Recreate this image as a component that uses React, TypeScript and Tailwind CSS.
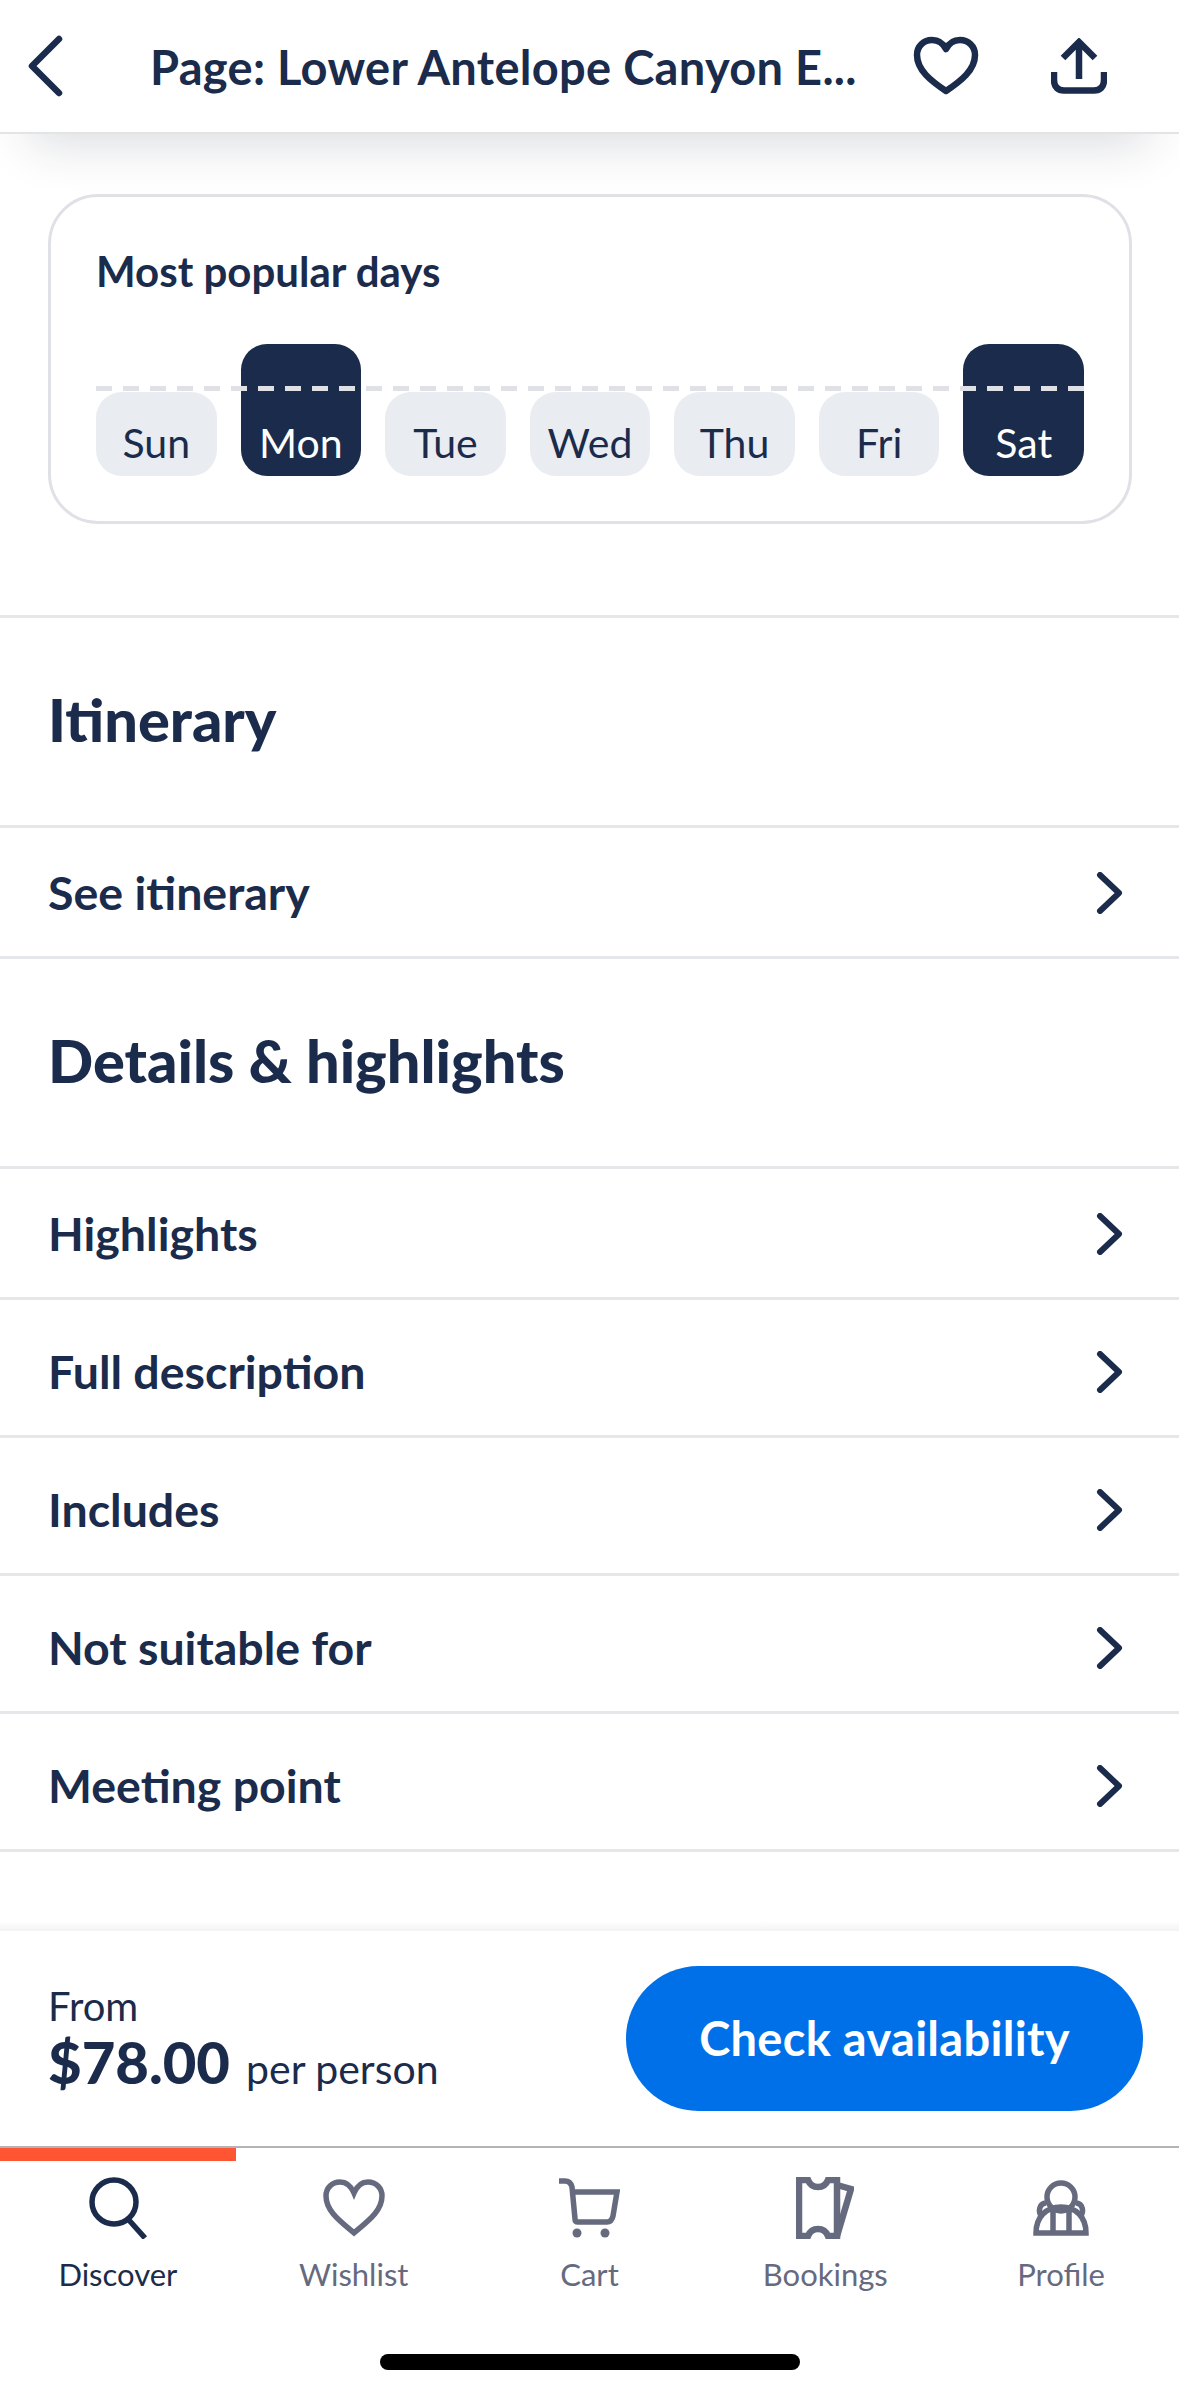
const days = [
  { label: "Sun", busy: false },
  { label: "Mon", busy: true },
  { label: "Tue", busy: false },
  { label: "Wed", busy: false },
  { label: "Thu", busy: false },
  { label: "Fri", busy: false },
  { label: "Sat", busy: true },
];

const details = ["Highlights", "Full description", "Includes", "Not suitable for", "Meeting point"];

function Chevron() {
  return (
    <svg className="mt-[2px]" width="30" height="42" viewBox="0 0 30 42" fill="none" stroke="#1b2b4b" strokeWidth="6" strokeLinecap="round" strokeLinejoin="round">
      <path d="M5 3l19 18L5 39" />
    </svg>
  );
}

function Row({ label, tall }: { label: string; tall?: boolean }) {
  return (
    <div className={`flex items-center justify-between border-b-[3px] border-[#e6e7ea] pl-[48px] pr-[54px] ${tall ? "h-[138px] pt-[7px]" : "h-[131px]"}`}>
      <span className="text-[46.500px] font-bold leading-none text-[#1b2b4b]">{label}</span>
      <Chevron />
    </div>
  );
}

function SectionTitle({ children }: { children: string }) {
  return (
    <div className="flex h-[210px] items-center border-b-[3px] border-[#e6e7ea] pb-[3px] pl-[48px]">
      <h2 className="text-[59.500px] font-black leading-none text-[#1b2b4b]">{children}</h2>
    </div>
  );
}

function NavItem({ label, active, children }: { label: string; active?: boolean; children: React.ReactNode }) {
  return (
    <div className={`flex flex-col items-center ${active ? "text-[#1b2b4b]" : "text-[#666a7e]"}`}>
      <div className="flex h-[62px] items-center justify-center">{children}</div>
      <span className="mt-[15px] text-[31px] leading-[40px]">{label}</span>
    </div>
  );
}

export default function App() {
  return (
    <div className="flex h-[2396px] w-[1179px] flex-col overflow-hidden bg-white font-['Lato',sans-serif]">
      <header className="relative z-10 flex h-[134px] shrink-0 items-center border-b-2 border-[#e4e4e6] bg-white shadow-[0_40px_50px_-30px_rgba(30,40,60,0.16)]">
        <svg className="ml-[26px] shrink-0" width="38" height="62" viewBox="0 0 38 62" fill="none" stroke="#1b2b4b" strokeWidth="6.5" strokeLinecap="round" strokeLinejoin="round">
          <path d="M33 4L6 31l27 27" />
        </svg>
        <h1 className="ml-[86px] mt-[2px] w-[710px] whitespace-nowrap text-[47px] font-bold leading-none tracking-[0.3px] text-[#1b2b4b]">Page: Lower Antelope Canyon E...</h1>
        <svg className="ml-[53px] shrink-0" width="66" height="60" viewBox="0 0 66 60" fill="none" stroke="#1b2b4b" strokeWidth="6.5" strokeLinejoin="round">
          <path d="M33 55C18 45 4 34 4 19 4 10 11 4 19 4c6 0 11 3 14 9 3-6 8-9 14-9 8 0 15 6 15 15 0 15-14 26-29 36z" />
        </svg>
        <svg className="ml-[72px] shrink-0" width="56" height="56" viewBox="0 0 56 56" fill="none" stroke="#1b2b4b" strokeWidth="6.5">
          <path d="M28 41V4M12 20L28 4l16 16M3 34v8c0 7 4 10.500 10 10.500h30c6 0 10-3.500 10-10.500v-8" />
        </svg>
      </header>

      <main className="flex flex-1 flex-col">
        <section className="h-[484px] shrink-0 border-b-[3px] border-[#e6e7ea] pl-[48px] pr-[47px] pt-[60px]">
          <div className="h-[330px] rounded-[50px] border-[3px] border-[#dfe1e6] px-[45px] pt-[51px]">
            <h3 className="text-[42px] font-bold leading-[46px] text-[#1b2b4b]">Most popular days</h3>
            <div className="relative mt-[50px] grid h-[132px] grid-cols-7 items-end gap-[24px]">
              {days.map((d) => (
                <div
                  key={d.label}
                  className={`flex items-end justify-center rounded-[26px] pb-[9px] text-[41px] leading-[48px] ${d.busy ? "h-[132px] bg-[#1b2b4b] text-white" : "h-[84px] bg-[#e9ecf0] text-[#1b2b4b]"}`}
                >
                  {d.label}
                </div>
              ))}
              <div className="absolute inset-x-0 top-[42px] h-[5px] bg-[repeating-linear-gradient(90deg,#dfe1e6_0_16px,transparent_16px_27px)]" />
            </div>
          </div>
        </section>

        <SectionTitle>Itinerary</SectionTitle>
        <Row label="See itinerary" />
        <SectionTitle>Details &amp; highlights</SectionTitle>
        {details.map((d, i) => (
          <Row key={d} label={d} tall={i > 0} />
        ))}
        <div className="mt-auto h-[10px] bg-gradient-to-b from-white to-[#f3f3f4]" />
      </main>

      <footer className="shrink-0 bg-white">
        <div className="flex h-[215px] items-center justify-between pl-[48px] pr-[36px]">
          <div className="text-[#1b2b4b]">
            <div className="text-[40px] leading-[46px]">From</div>
            <div className="flex items-baseline">
              <span className="text-[58px] font-black leading-[66px]">$78.00</span>
              <span className="ml-[16px] text-[41px] leading-[46px]">per person</span>
            </div>
          </div>
          <button className="h-[145px] w-[517px] rounded-full bg-[#0070e8] text-[47px] font-bold tracking-[0.3px] text-white">Check availability</button>
        </div>
        <div className="relative h-[250px] border-t-2 border-[#b4b4b6]">
          <div className="absolute left-0 top-0 h-[13px] w-[236px] bg-[#ff5533]" />
          <div className="grid grid-cols-5 pt-[29px]">
            <NavItem label="Discover" active>
              <svg width="62" height="62" viewBox="0 0 62 62" fill="none" stroke="currentColor" strokeWidth="5.5">
                <circle cx="27" cy="25" r="22" />
                <path d="M41 42l17 19" />
              </svg>
            </NavItem>
            <NavItem label="Wishlist">
              <svg width="62" height="58" viewBox="0 0 62 58" fill="none" stroke="currentColor" strokeWidth="5.5">
                <path d="M31 54C17 42 3 32 3 17 3 9 9 3 17 3c6 0 11 4 14 11 3-7 8-11 14-11 8 0 14 6 14 14 0 15-14 25-28 37z" />
              </svg>
            </NavItem>
            <NavItem label="Cart">
              <svg width="62" height="60" viewBox="0 0 62 60" fill="currentColor">
                <path d="M1 3h6c4 0 6 2 7 6l3 32c0 2 1 3 3 3h29" fill="none" stroke="currentColor" strokeWidth="5.5" />
                <path d="M12 14h47l-4 24c-1 4-3 6-6 6" fill="none" stroke="currentColor" strokeWidth="5.5" />
                <circle cx="19" cy="55" r="4.500" />
                <circle cx="47" cy="55" r="4.500" />
              </svg>
            </NavItem>
            <NavItem label="Bookings">
              <svg width="58" height="62" viewBox="0 0 58 62" fill="none" stroke="currentColor" strokeWidth="6.5">
                <path d="M3 3h9c2 5 6 7 10 7s8-2 10-7h9v56h-9c-2-5-6-7-10-7s-8 2-10 7H3z" />
                <path d="M41 8l14 4-14 47" />
              </svg>
            </NavItem>
            <NavItem label="Profile">
              <svg width="56" height="56" viewBox="0 0 56 56" fill="none" stroke="currentColor" strokeWidth="5.5">
                <circle cx="28" cy="17" r="14" />
                <path d="M3 53c0-16 10-26 25-26s25 10 25 26zM20 28v25M36 28v25" />
                <path d="M13 23c-6 0-9 8-4 14M43 23c6 0 9 8 4 14" />
              </svg>
            </NavItem>
          </div>
          <div className="absolute bottom-[26px] left-1/2 h-[16px] w-[420px] -translate-x-1/2 rounded-full bg-black" />
        </div>
      </footer>
    </div>
  );
}
